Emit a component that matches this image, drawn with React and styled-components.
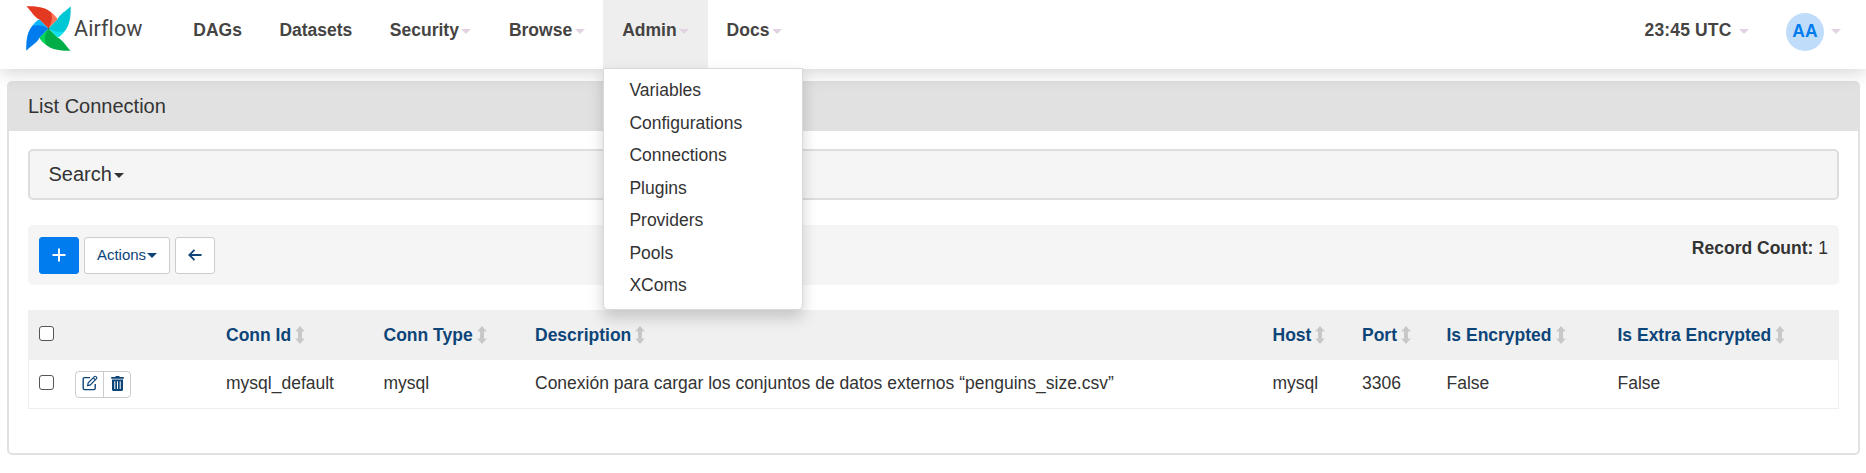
import React from 'react';
import styled, { createGlobalStyle } from 'styled-components';

const GlobalStyle = createGlobalStyle`
  *, *::before, *::after { box-sizing: border-box; }
  body {
    margin: 0;
    background: #fff;
    color: #333;
    font: 17.5px/25px "Liberation Sans", Arial, sans-serif;
  }
`;

const Page = styled.div`
  height: 473px;
  overflow: hidden;
`;

const Navbar = styled.nav`
  position: relative;
  z-index: 2;
  display: flex;
  align-items: stretch;
  height: 69px;
  padding: 0 25px 0 26px;
  background: #fff;
  box-shadow: 0 3px 18px rgba(0, 0, 0, 0.18);
  color: #454443;
  font-weight: bold;
`;

const Brand = styled.a`
  display: flex;
  align-items: flex-start;
  width: 148.5px;
  padding-top: 6px;
`;

const BrandName = styled.span`
  margin: 9px 0 0 3px;
  font: 400 21.5px/28px Roboto, sans-serif;
  letter-spacing: 0.1px;
`;

const NavItem = styled.div`
  position: relative;
  display: flex;
  align-items: flex-start;
  padding: 18px 18.75px 0;
  background: ${(p) => (p.$open ? '#eee' : 'transparent')};
`;

const Spacer = styled.div`
  flex: 1;
`;

const Clock = styled(NavItem)`
  padding: 18px 37px 0 0;
  letter-spacing: 0.15px;
`;

const User = styled.div`
  display: flex;
  align-items: flex-start;
  padding-top: 13px;
`;

const Avatar = styled.span`
  width: 38px;
  height: 38px;
  border-radius: 50%;
  background: #bfddfb;
  color: #017cee;
  text-align: center;
  line-height: 36px;
`;

const Caret = styled.i`
  width: 0;
  height: 0;
  margin: ${(p) => p.$top || 11}px 0 0 ${(p) => p.$gap ?? 2.5}px;
  border: 5px solid transparent;
  border-top-color: ${(p) => p.$color || '#e2d2e2'};
  border-bottom: 0;
`;

const Menu = styled.ul`
  position: absolute;
  top: 68px;
  left: 0;
  width: 200px;
  height: 242px;
  margin: 0;
  padding: 5px 0;
  list-style: none;
  background: #fff;
  border: 1px solid #d9d9d9;
  border-radius: 0 0 5px 5px;
  box-shadow: 0 7.5px 15px rgba(0, 0, 0, 0.175);
  color: #333;
  font-weight: normal;
`;

const MenuItem = styled.li`
  height: 32.5px;
  padding: 4px 25px 0;
`;

const Panel = styled.section`
  width: 1853px;
  height: 374px;
  margin: 12px 0 0 7px;
  border: 2px solid #e1e1e1;
  border-radius: 5px;
  background: #fff;
`;

const PanelHeader = styled.header`
  height: 48px;
  padding: 11px 19px 0;
  background: #e1e1e1;
  font-size: 20px;
`;

const PanelBody = styled.div`
  display: flex;
  flex-direction: column;
  gap: 25px;
  padding: 18px 19px;
`;

const SearchBox = styled.div`
  display: flex;
  align-items: flex-start;
  height: 51px;
  padding: 11px 19px 0 18.5px;
  border: 2px solid #ddd;
  border-radius: 5px;
  background: #f5f5f5;
  font-size: 20px;
`;

const Toolbar = styled.div`
  display: flex;
  align-items: flex-start;
  gap: 5px;
  height: 60px;
  padding: 12px 11px 0;
  border-radius: 5px;
  background: #f5f5f5;
`;

const Button = styled.button`
  display: flex;
  align-items: center;
  justify-content: center;
  width: ${(p) => p.$width || 40}px;
  height: 37px;
  padding: 0 0 2px;
  border: 1px solid ${(p) => (p.$primary ? '#017cee' : '#ccc')};
  border-radius: 3px;
  background: ${(p) => (p.$primary ? '#017cee' : '#fff')};
  color: ${(p) => (p.$primary ? '#fff' : '#0d4579')};
  font: 15px/22px "Liberation Sans", Arial, sans-serif;
`;

const RecordCount = styled.div`
  margin: -1px 0 0 auto;
`;

const Table = styled.table`
  width: 1811px;
  border-collapse: separate;
  border-spacing: 0;
  table-layout: fixed;
  border: 1px solid #efefef;
  border-top: 0;
`;

const HeadCell = styled.th`
  height: 50px;
  padding: 0;
  background: #f0f0f0;
  color: #0d4579;
  text-align: left;
`;

const Cell = styled.td`
  height: 48px;
  padding: 0 0 1px;
`;

const Sortable = styled.span`
  display: flex;
  align-items: center;
  gap: 4px;
`;

const Checkbox = styled.input`
  display: block;
  width: 15px;
  height: 15px;
  margin: ${(p) => p.$offset}px 0 0 10px;
  appearance: none;
  border: 1px solid #555;
  border-radius: 3px;
  background: #fff;
`;

const IconGroup = styled.div`
  display: flex;
  width: 56px;
  height: 27px;
  margin-top: 1px;
  border: 1px solid #ccc;
  border-radius: 4px;
  color: #0d4579;
`;

const IconButton = styled.span`
  display: flex;
  flex: 1;
  align-items: center;
  justify-content: center;
  padding: 0 0 2px 1px;

  & + & {
    border-left: 1px solid #ccc;
  }
`;

const blades = [
  ['#e43921', '#ff7557', 0],
  ['#00c7d4', '#11e1ee', 90],
  ['#00ad46', '#04d659', 180],
  ['#017cee', '#0cb6ff', 270],
];

const Pinwheel = () => (
  <svg width="45" height="45" viewBox="-68 -68 136 136">
    {blades.map(([, light, angle]) => (
      <path
        key={angle}
        transform={`rotate(${angle})`}
        fill={light}
        d="M6-50C16-44 23-36 28-27L0 0Z"
      />
    ))}
    {blades.map(([dark, , angle]) => (
      <path
        key={angle}
        transform={`rotate(${angle})`}
        fill={dark}
        d="M-67-67C-40-68-10-65 8-49C13-30 9-14 0 0L-27-27C-44-34-52-53-67-67Z"
      />
    ))}
    <circle r="2.5" fill="#51504f" />
  </svg>
);

const SortIcon = () => (
  <svg width="10" height="18" viewBox="0 0 10 18" fill="#c8c8c8">
    <path d="M5 0L9.8 5.6H7V12.4H9.8L5 18L.2 12.4H3V5.6H.2Z" />
  </svg>
);

const PlusIcon = () => (
  <svg width="14" height="14" viewBox="0 0 14 14" stroke="currentColor" strokeWidth="2" fill="none">
    <path d="M7 .5V13.5M.5 7H13.5" />
  </svg>
);

const BackIcon = () => (
  <svg width="14" height="12" viewBox="0 0 14 12" stroke="currentColor" strokeWidth="1.8" fill="none">
    <path d="M13.5 6H1.5M6.5 .8L1.3 6L6.5 11.2" />
  </svg>
);

const EditIcon = () => (
  <svg width="16" height="16" viewBox="0 0 16 16" stroke="currentColor" strokeWidth="1.4" fill="none">
    <path d="M8 2.6H2.6Q1.2 2.6 1.2 4V13.2Q1.2 14.6 2.6 14.6H11.8Q13.2 14.6 13.2 13.2V9" />
    <path d="M5.6 10.6L6.2 7.8L12.4 1.6Q13.2 .9 14 1.6L14.5 2.1Q15.2 2.9 14.5 3.7L8.3 9.9ZM11.2 2.8L13.3 4.9" strokeWidth="1.2" />
  </svg>
);

const TrashIcon = () => (
  <svg width="13" height="15" viewBox="0 0 13 15" fill="currentColor">
    <path d="M4.5 0H8.5V1H12.8V2.8H.2V1H4.5Z" />
    <path fillRule="evenodd" d="M1 3.6H12V13.5Q12 15 10.5 15H2.5Q1 15 1 13.5ZM3.3 5.2V13H4.3V5.2ZM6 5.2V13H7V5.2ZM8.7 5.2V13H9.7V5.2Z" />
  </svg>
);

const adminLinks = ['Variables', 'Configurations', 'Connections', 'Plugins', 'Providers', 'Pools', 'XComs'];

const navItems = [
  { label: 'DAGs' },
  { label: 'Datasets' },
  { label: 'Security', caret: true },
  { label: 'Browse', caret: true },
  { label: 'Admin', caret: true, links: adminLinks },
  { label: 'Docs', caret: true },
];

const columns = [
  { label: 'Conn Id', width: 157.5, value: 'mysql_default' },
  { label: 'Conn Type', width: 151.5, value: 'mysql' },
  { label: 'Description', width: 737.5, value: 'Conexión para cargar los conjuntos de datos externos “penguins_size.csv”' },
  { label: 'Host', width: 89.5, value: 'mysql' },
  { label: 'Port', width: 84.5, value: '3306' },
  { label: 'Is Encrypted', width: 171, value: 'False' },
  { label: 'Is Extra Encrypted', width: 220.5, value: 'False' },
];

export default function App() {
  return (
    <Page>
      <GlobalStyle />
      <Navbar>
        <Brand>
          <Pinwheel />
          <BrandName>Airflow</BrandName>
        </Brand>
        {navItems.map(({ label, caret, links }) => (
          <NavItem key={label} $open={Boolean(links)}>
            {label}
            {caret && <Caret />}
            {links && (
              <Menu>
                {links.map((link) => (
                  <MenuItem key={link}>{link}</MenuItem>
                ))}
              </Menu>
            )}
          </NavItem>
        ))}
        <Spacer />
        <Clock>
          23:45 UTC
          <Caret $gap={7.5} />
        </Clock>
        <User>
          <Avatar>AA</Avatar>
          <Caret $top={16} $gap={7} />
        </User>
      </Navbar>
      <Panel>
        <PanelHeader>List Connection</PanelHeader>
        <PanelBody>
          <SearchBox>
            Search
            <Caret $color="#333" />
          </SearchBox>
          <Toolbar>
            <Button $primary>
              <PlusIcon />
            </Button>
            <Button $width={86}>
              Actions
              <Caret $color="#0d4579" $top={1} $gap={1} />
            </Button>
            <Button>
              <BackIcon />
            </Button>
            <RecordCount>
              <b>Record Count:</b> 1
            </RecordCount>
          </Toolbar>
          <Table>
            <colgroup>
              <col style={{ width: 46 }} />
              <col style={{ width: 151 }} />
              {columns.map(({ label, width }) => (
                <col key={label} style={{ width }} />
              ))}
            </colgroup>
            <thead>
              <tr>
                <HeadCell>
                  <Checkbox type="checkbox" $offset={-4} />
                </HeadCell>
                <HeadCell />
                {columns.map(({ label }) => (
                  <HeadCell key={label}>
                    <Sortable>
                      {label}
                      <SortIcon />
                    </Sortable>
                  </HeadCell>
                ))}
              </tr>
            </thead>
            <tbody>
              <tr>
                <Cell>
                  <Checkbox type="checkbox" $offset={-3} />
                </Cell>
                <Cell>
                  <IconGroup>
                    <IconButton>
                      <EditIcon />
                    </IconButton>
                    <IconButton>
                      <TrashIcon />
                    </IconButton>
                  </IconGroup>
                </Cell>
                {columns.map(({ label, value }) => (
                  <Cell key={label}>{value}</Cell>
                ))}
              </tr>
            </tbody>
          </Table>
        </PanelBody>
      </Panel>
    </Page>
  );
}
